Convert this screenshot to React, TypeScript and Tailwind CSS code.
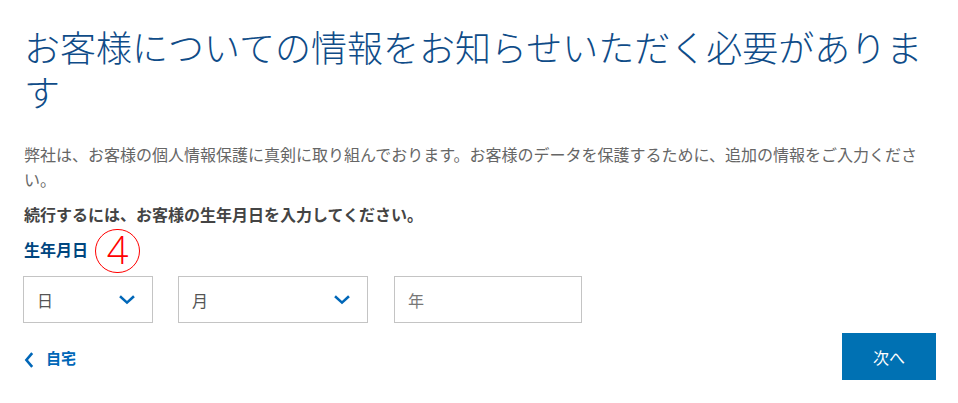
import React from 'react'

const jp = { fontFamily: '"Noto Sans CJK JP", "Noto Sans", sans-serif' }

function Chevron({ className }: { className?: string }) {
  return (
    <svg viewBox="0 0 16 10" className={className} fill="none" stroke="currentColor" strokeWidth="2.6" strokeLinecap="square">
      <path d="M2 2.2 L8 7.6 L14 2.2" />
    </svg>
  )
}

function Select({ label, w }: { label: string; w: string }) {
  return (
    <div className={`${w} h-[47px] border border-[#c4c4c4] flex items-center justify-between pl-[13px] pr-[17px]`}>
      <span className="text-[16px] text-[#555]">{label}</span>
      <Chevron className="w-[16px] h-[10px] text-[#0067b8]" />
    </div>
  )
}

export default function App(){
  return (
    <div className="w-[958px] h-[403px] bg-white pl-6 pr-[23px] pt-6 overflow-hidden" style={jp}>
      <h1 className="text-[36px] leading-[45px] font-light text-[#0f4c88]">
        お客様についての情報をお知らせいただく必要があります
      </h1>
      <p className="mt-[28px] text-[16px] leading-[25px] text-[#666]">
        弊社は、お客様の個人情報保護に真剣に取り組んでおります。お客様のデータを保護するために、追加の情報をご入力ください。
      </p>
      <p className="mt-[10px] text-[16px] leading-[25px] font-bold text-[#444]">
        続行するには、お客様の生年月日を入力してください。
      </p>
      <div className="mt-[10px] relative inline-block text-[16px] leading-[25px] font-bold text-[#00467f]">
        生年月日
        <div className="absolute left-[71px] top-[-8px] w-[45px] h-[44px] rounded-full border border-[#ff0000] flex items-center justify-center">
          <span className="text-[38px] leading-none font-light text-[#ff0000] -mt-[5px]" style={{ fontFamily: '"Open Sans", sans-serif' }}>4</span>
        </div>
      </div>
      <div className="mt-[14px] flex gap-[25px] -ml-px">
        <Select label="日" w="w-[130px]" />
        <Select label="月" w="w-[190px]" />
        <div className="w-[188px] h-[47px] border border-[#c4c4c4] flex items-center pl-[13px] ml-px">
          <span className="text-[16px] text-[#777]">年</span>
        </div>
      </div>
      <div className="mt-[10px] flex items-center justify-between">
        <a className="flex items-center gap-[12px] text-[#0067b8] font-bold text-[15px] pt-[3px]">
          <svg viewBox="0 0 10 16" className="w-[10px] h-[16px] mt-[4px]" fill="none" stroke="currentColor" strokeWidth="2.6">
            <path d="M8.2 1.2 L2.4 8 L8.2 14.8" />
          </svg>
          <span>自宅</span>
        </a>
        <button className="w-[94px] h-[47px] bg-[#0071b3] text-white text-[16px] mr-[-1px]">次へ</button>
      </div>
    </div>
  )
}
